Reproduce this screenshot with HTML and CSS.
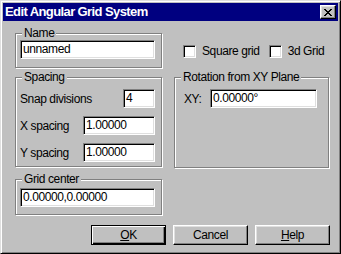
FILE: index.html
```html
<!DOCTYPE html>
<html lang="en">
<head>
    <meta charset="UTF-8">
    <meta name="viewport" content="width=device-width, initial-scale=1.0">
    <title>Edit Angular Grid System</title>
    <link rel="stylesheet" href="styles.css">
</head>
<body>
    <div class="window">
        <div class="titlebar">
            <span class="title">Edit Angular Grid System</span>
            <span class="close-btn">
                <svg width="8" height="7" viewBox="0 0 8 7" shape-rendering="crispEdges">
                    <path fill="#000" d="M0 0h2v1H0zM6 0h2v1H6zM1 1h2v1H1zM5 1h2v1H5zM2 2h4v1H2zM3 3h2v1H3zM2 4h4v1H2zM1 5h2v1H1zM5 5h2v1H5zM0 6h2v1H0zM6 6h2v1H6z"/>
                </svg>
            </span>
        </div>

        <div class="content">
            <div class="columns">
                <div class="col-left">
                    <div class="group group-name">
                        <span class="group-label">Name</span>
                        <div class="field field-wide">unnamed</div>
                    </div>

                    <div class="group group-spacing">
                        <span class="group-label">Spacing</span>
                        <div class="row">
                            <span>Snap divisions</span>
                            <div class="field field-small">4</div>
                        </div>
                        <div class="row">
                            <span>X spacing</span>
                            <div class="field field-mid">1.00000</div>
                        </div>
                        <div class="row">
                            <span>Y spacing</span>
                            <div class="field field-mid">1.00000</div>
                        </div>
                    </div>

                    <div class="group group-center">
                        <span class="group-label">Grid center</span>
                        <div class="field field-wide">0.00000,0.00000</div>
                    </div>
                </div>

                <div class="col-right">
                    <div class="checks">
                        <label class="check"><span class="checkbox"></span>Square grid</label>
                        <label class="check"><span class="checkbox"></span>3d Grid</label>
                    </div>

                    <div class="group group-rotation">
                        <span class="group-label">Rotation from XY Plane</span>
                        <div class="row">
                            <span>XY:</span>
                            <div class="field field-xy">0.00000°</div>
                        </div>
                    </div>
                </div>
            </div>

            <div class="buttons">
                <button class="btn btn-default"><u>O</u>K</button>
                <button class="btn">Cancel</button>
                <button class="btn"><u>H</u>elp</button>
            </div>
        </div>
    </div>
</body>
</html>
```

FILE: styles.css
```css
* {
    box-sizing: border-box;
    margin: 0;
    padding: 0;
}

body {
    font-family: "Liberation Sans", Arial, sans-serif;
    font-size: 12px;
    letter-spacing: -0.4px;
    color: #000;
    background-color: #c0c0c0;
}

.window {
    width: 341px;
    height: 254px;
    background-color: #c0c0c0;
    border: 1px solid;
    border-color: #dfdfdf #000 #000 #dfdfdf;
    box-shadow: inset 1px 1px #fff, inset -1px -1px #808080;
    padding: 2px;
}

.titlebar {
    height: 18px;
    background-color: #000080;
    color: #fff;
    display: flex;
    align-items: center;
    justify-content: space-between;
    padding-left: 2px;
    padding-right: 2px;
}

.title {
    font-size: 13px;
    font-weight: bold;
    letter-spacing: -0.6px;
    line-height: 18px;
}

.close-btn {
    width: 16px;
    height: 14px;
    background-color: #c0c0c0;
    border: 1px solid;
    border-color: #fff #000 #000 #fff;
    box-shadow: inset -1px -1px #808080, inset 1px 1px #dfdfdf;
    display: flex;
    align-items: center;
    justify-content: center;
}

.close-btn svg {
    display: block;
}

.content {
    padding: 12px 8px 0 12px;
}

.columns {
    display: flex;
    gap: 12px;
}

.col-left {
    width: 147px;
}

.col-right {
    width: 155px;
}

/* etched group box */
.group {
    position: relative;
    border: 1px solid #808080;
    box-shadow: inset 1px 1px #fff, 1px 1px #fff;
}

.group-label {
    position: absolute;
    top: -8px;
    left: 6px;
    padding: 0 2px;
    line-height: 14px;
    white-space: nowrap;
    background-color: #c0c0c0;
}

.group-name {
    height: 35px;
    padding: 6px 6px 0 4px;
}

.group-spacing {
    height: 90px;
    margin-top: 9px;
    padding: 11px 6px 0 4px;
    display: flex;
    flex-direction: column;
    gap: 8px;
}

.group-center {
    height: 36px;
    margin-top: 12px;
    padding: 8px 6px 0 4px;
}

.group-rotation {
    height: 91px;
    margin-top: 19px;
    padding: 11px 11px 0 9px;
}

.row {
    display: flex;
    align-items: center;
    justify-content: space-between;
    height: 19px;
}

/* sunken edit field */
.field {
    height: 19px;
    background-color: #fff;
    border: 1px solid;
    border-color: #808080 #fff #fff #808080;
    box-shadow: inset 1px 1px #000, inset -1px -1px #dfdfdf;
    padding-left: 2px;
    line-height: 17px;
    white-space: nowrap;
    overflow: hidden;
}

.field-wide {
    width: 135px;
}

.field-small {
    width: 32px;
}

.field-mid {
    width: 72px;
}

.field-xy {
    width: 107px;
}

.checks {
    display: flex;
    gap: 9px;
    margin-top: 12px;
    padding-left: 9px;
    height: 13px;
    align-items: center;
}

.check {
    display: flex;
    align-items: center;
    gap: 6px;
    line-height: 13px;
    white-space: nowrap;
}

.checkbox {
    width: 13px;
    height: 13px;
    flex-shrink: 0;
    background-color: #fff;
    border: 1px solid;
    border-color: #808080 #fff #fff #808080;
    box-shadow: inset 1px 1px #000, inset -1px -1px #dfdfdf;
}

.buttons {
    display: flex;
    justify-content: flex-end;
    gap: 7px;
    margin-top: 10px;
}

.btn {
    width: 75px;
    height: 20px;
    font-family: inherit;
    font-size: 12px;
    letter-spacing: -0.4px;
    color: #000;
    background-color: #c0c0c0;
    border: 1px solid;
    border-color: #fff #000 #000 #fff;
    box-shadow: inset -1px -1px #808080, inset 1px 1px #dfdfdf;
    line-height: 16px;
}

.btn-default {
    border-color: #000;
    box-shadow: inset 1px 1px #fff, inset -1px -1px #000, inset -2px -2px #808080;
}
```
